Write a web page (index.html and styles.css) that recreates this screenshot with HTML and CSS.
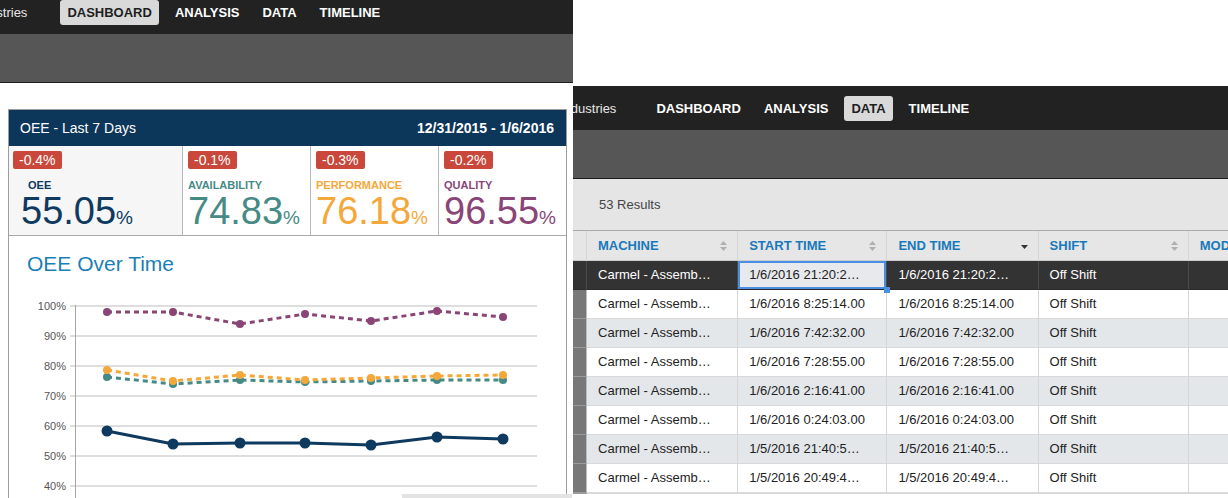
FILE: index.html
```html
<!DOCTYPE html>
<html lang="en">
<head>
<meta charset="utf-8">
<title>OEE Dashboard &amp; Data</title>
<link rel="stylesheet" href="styles.css">
</head>
<body>
<div class="desk">

  <section class="shot shot-left">
    <div class="app">
      <nav class="topnav">
        <span class="brand">Industries</span>
        <ul class="menu">
          <li class="active">DASHBOARD</li>
          <li>ANALYSIS</li>
          <li>DATA</li>
          <li>TIMELINE</li>
        </ul>
      </nav>
      <div class="subbar"></div>
      <main class="dash">
        <div class="card">
          <header class="card-head">
            <span>OEE - Last 7 Days</span>
            <strong>12/31/2015 - 1/6/2016</strong>
          </header>
          <div class="kpis">
            <div class="kpi kpi-oee">
              <span class="delta">-0.4%</span>
              <div class="kpi-label">OEE</div>
              <div class="kpi-value">55.05<small>%</small></div>
            </div>
            <div class="kpi kpi-avail">
              <span class="delta">-0.1%</span>
              <div class="kpi-label">AVAILABILITY</div>
              <div class="kpi-value">74.83<small>%</small></div>
            </div>
            <div class="kpi kpi-perf">
              <span class="delta">-0.3%</span>
              <div class="kpi-label">PERFORMANCE</div>
              <div class="kpi-value">76.18<small>%</small></div>
            </div>
            <div class="kpi kpi-qual">
              <span class="delta">-0.2%</span>
              <div class="kpi-label">QUALITY</div>
              <div class="kpi-value">96.55<small>%</small></div>
            </div>
          </div>
          <div class="chart-block">
            <h2>OEE Over Time</h2>
            <svg class="chart" viewBox="9 286 557 220" width="557" height="220">
              <g class="gridlines">
                <line x1="70" x2="537" y1="306" y2="306"/>
                <line x1="70" x2="537" y1="336" y2="336"/>
                <line x1="70" x2="537" y1="366" y2="366"/>
                <line x1="70" x2="537" y1="396" y2="396"/>
                <line x1="70" x2="537" y1="426" y2="426"/>
                <line x1="70" x2="537" y1="456" y2="456"/>
                <line x1="70" x2="537" y1="486" y2="486"/>
              </g>
              <line class="axis" x1="75.5" x2="75.5" y1="305" y2="506"/>
              <g class="ylabels">
                <text x="66" y="310">100%</text>
                <text x="66" y="340">90%</text>
                <text x="66" y="370">80%</text>
                <text x="66" y="400">70%</text>
                <text x="66" y="430">60%</text>
                <text x="66" y="460">50%</text>
                <text x="66" y="490">40%</text>
              </g>
              <polyline class="line dashed s-teal" points="107,377 173,384 240,380 305,382 371,381 437,380 503,380"/>
              <polyline class="line dashed s-orange" points="107,370 173,381 240,375 305,380 371,378 437,376 503,375"/>
              <polyline class="line dashed s-purple" points="107,312 173,312 240,324 305,314 371,321 437,311 503,317"/>
              <polyline class="line s-navy" points="107,431 173,444 240,443 305,443 371,445 437,437 503,439"/>
              <g class="dots d-teal">
                <circle cx="107" cy="377" r="4"/><circle cx="173" cy="384" r="4"/><circle cx="240" cy="380" r="4"/><circle cx="305" cy="382" r="4"/><circle cx="371" cy="381" r="4"/><circle cx="437" cy="380" r="4"/><circle cx="503" cy="380" r="4"/>
              </g>
              <g class="dots d-orange">
                <circle cx="107" cy="370" r="4"/><circle cx="173" cy="381" r="4"/><circle cx="240" cy="375" r="4"/><circle cx="305" cy="380" r="4"/><circle cx="371" cy="378" r="4"/><circle cx="437" cy="376" r="4"/><circle cx="503" cy="375" r="4"/>
              </g>
              <g class="dots d-purple">
                <circle cx="107" cy="312" r="4"/><circle cx="173" cy="312" r="4"/><circle cx="240" cy="324" r="4"/><circle cx="305" cy="314" r="4"/><circle cx="371" cy="321" r="4"/><circle cx="437" cy="311" r="4"/><circle cx="503" cy="317" r="4"/>
              </g>
              <g class="dots d-navy">
                <circle cx="107" cy="431" r="5.5"/><circle cx="173" cy="444" r="5.5"/><circle cx="240" cy="443" r="5.5"/><circle cx="305" cy="443" r="5.5"/><circle cx="371" cy="445" r="5.5"/><circle cx="437" cy="437" r="5.5"/><circle cx="503" cy="439" r="5.5"/>
              </g>
            </svg>
          </div>
        </div>
      </main>
    </div>
    <div class="hscroll"></div>
  </section>

  <section class="shot shot-right">
    <div class="app">
      <nav class="topnav">
        <span class="brand">Industries</span>
        <ul class="menu">
          <li>DASHBOARD</li>
          <li>ANALYSIS</li>
          <li class="active">DATA</li>
          <li>TIMELINE</li>
        </ul>
      </nav>
      <div class="subbar"></div>
      <div class="results">53 Results</div>
      <table class="grid">
        <colgroup>
          <col class="c-gut"><col class="c-w151"><col class="c-w149"><col class="c-w151"><col class="c-w150"><col class="c-w150">
        </colgroup>
        <thead>
          <tr>
            <th class="gut"></th>
            <th>MACHINE<span class="sort"><svg viewBox="0 0 7 10" width="7" height="10"><path d="M3.5 0 L7 4 L0 4 Z M3.5 10 L7 6 L0 6 Z"/></svg></span></th>
            <th>START TIME<span class="sort"><svg viewBox="0 0 7 10" width="7" height="10"><path d="M3.5 0 L7 4 L0 4 Z M3.5 10 L7 6 L0 6 Z"/></svg></span></th>
            <th>END TIME<span class="sort sort-desc"><svg viewBox="0 0 7 10" width="7" height="10"><path d="M0 4 L7 4 L3.5 8 Z"/></svg></span></th>
            <th>SHIFT<span class="sort"><svg viewBox="0 0 7 10" width="7" height="10"><path d="M3.5 0 L7 4 L0 4 Z M3.5 10 L7 6 L0 6 Z"/></svg></span></th>
            <th>MOD</th>
          </tr>
        </thead>
        <tbody>
          <tr class="sel">
            <td class="gut"></td><td>Carmel - Assemb…</td><td class="focus">1/6/2016 21:20:2…</td><td>1/6/2016 21:20:2…</td><td>Off Shift</td><td></td>
          </tr>
          <tr>
            <td class="gut"></td><td>Carmel - Assemb…</td><td>1/6/2016 8:25:14.00</td><td>1/6/2016 8:25:14.00</td><td>Off Shift</td><td></td>
          </tr>
          <tr>
            <td class="gut"></td><td>Carmel - Assemb…</td><td>1/6/2016 7:42:32.00</td><td>1/6/2016 7:42:32.00</td><td>Off Shift</td><td></td>
          </tr>
          <tr>
            <td class="gut"></td><td>Carmel - Assemb…</td><td>1/6/2016 7:28:55.00</td><td>1/6/2016 7:28:55.00</td><td>Off Shift</td><td></td>
          </tr>
          <tr>
            <td class="gut"></td><td>Carmel - Assemb…</td><td>1/6/2016 2:16:41.00</td><td>1/6/2016 2:16:41.00</td><td>Off Shift</td><td></td>
          </tr>
          <tr>
            <td class="gut"></td><td>Carmel - Assemb…</td><td>1/6/2016 0:24:03.00</td><td>1/6/2016 0:24:03.00</td><td>Off Shift</td><td></td>
          </tr>
          <tr>
            <td class="gut"></td><td>Carmel - Assemb…</td><td>1/5/2016 21:40:5…</td><td>1/5/2016 21:40:5…</td><td>Off Shift</td><td></td>
          </tr>
          <tr>
            <td class="gut"></td><td>Carmel - Assemb…</td><td>1/5/2016 20:49:4…</td><td>1/5/2016 20:49:4…</td><td>Off Shift</td><td></td>
          </tr>
          <tr>
            <td class="gut"></td><td></td><td></td><td></td><td></td><td></td>
          </tr>
        </tbody>
      </table>
    </div>
  </section>

</div>
</body>
</html>
```

FILE: styles.css
```css
* { box-sizing: border-box; }

html, body {
  margin: 0;
  padding: 0;
}

body {
  background: #fff;
  font-family: "Liberation Sans", Arial, Helvetica, sans-serif;
  color: #222;
}

.desk {
  position: relative;
  width: 1228px;
  height: 498px;
  overflow: hidden;
}

/* the two cropped application windows */
.shot {
  position: absolute;
  overflow: hidden;
  background: #fff;
}

.shot-left {
  left: 0;
  top: 0;
  width: 573px;
  height: 498px;
}

.shot-left .app { margin-top: -10px; }

.shot-right {
  left: 573px;
  top: 86px;
  width: 655px;
  height: 412px;
}

/* top navigation */
.topnav {
  height: 44px;
  background: #222;
  display: flex;
  align-items: center;
  white-space: nowrap;
}

.brand {
  font-size: 13px;
  color: #e8e8e8;
}

.shot-left .brand { margin-left: -29px; }
.shot-right .brand { margin-left: -13px; }

.menu {
  display: flex;
  gap: 9px;
  margin: 0 0 0 33px;
  padding: 0;
  list-style: none;
}

.menu li {
  height: 25px;
  line-height: 25px;
  padding: 0 7px;
  border-radius: 3px;
  font-size: 13px;
  font-weight: bold;
  color: #fff;
}

.menu li.active {
  background: #d9d9d9;
  color: #1e1e1e;
}

.subbar {
  height: 49px;
  background: #565656;
  border-bottom: 1px solid #1c1c1c;
}

/* dashboard */
.dash {
  padding: 26px 6px 0 8px;
}

.card {
  border: 1px solid #9d9d9d;
}

.card-head {
  height: 36px;
  background: #0c365a;
  color: #fff;
  display: flex;
  justify-content: space-between;
  align-items: center;
  padding: 0 12px 0 11px;
  font-size: 14px;
}

.kpis {
  display: grid;
  grid-template-columns: 173px 128px 128px 1fr;
  border-bottom: 1px solid #a9a9a9;
}

.kpi {
  height: 89px;
  padding: 5px 5px;
}

.kpi + .kpi { border-left: 1px solid #b8b8b8; }

.kpi-oee {
  background: #f6f6f6;
  padding-left: 4px;
}

.delta {
  display: inline-block;
  height: 18px;
  line-height: 18px;
  padding: 0 6px;
  background: #c9483b;
  color: #fff;
  font-size: 14px;
  border-radius: 2px;
}

.kpi-label {
  margin-top: 10px;
  font-size: 11px;
  line-height: 13px;
  font-weight: bold;
}

.kpi-value {
  font-size: 38px;
  line-height: 38px;
}

.kpi-value small { font-size: 19px; }

.kpi-oee .kpi-label { margin-left: 15px; }
.kpi-oee .kpi-value { margin-left: 8px; }

.kpi-oee   { color: #0d3a5e; }
.kpi-avail { color: #468a86; }
.kpi-perf  { color: #f5a83a; }
.kpi-qual  { color: #8a4577; }

.chart-block h2 {
  margin: 16px 0 10px 18px;
  font-size: 21px;
  line-height: 24px;
  font-weight: normal;
  color: #1a7fb6;
}

.chart { display: block; }

.gridlines line { stroke: #dedede; stroke-width: 2; }
.axis { stroke: #a5a5a5; stroke-width: 1; }
.ylabels text { font-size: 11px; fill: #555; text-anchor: end; font-family: "Liberation Sans", Arial, sans-serif; }

.line { fill: none; stroke-width: 3; stroke-linejoin: round; }
.dashed { stroke-dasharray: 5 4; }
.s-teal   { stroke: #468a86; }
.s-orange { stroke: #f5a83a; }
.s-purple { stroke: #8a4577; }
.s-navy   { stroke: #0d3a5e; }
.d-teal   { fill: #468a86; }
.d-orange { fill: #f5a83a; }
.d-purple { fill: #8a4577; }
.d-navy   { fill: #0d3a5e; }

.hscroll {
  position: absolute;
  left: 402px;
  top: 494px;
  width: 170px;
  height: 4px;
  background: #e3e3e3;
}

/* data view */
.results {
  height: 51px;
  background: #e5e5e5;
  padding-left: 26px;
  display: flex;
  align-items: center;
  font-size: 13px;
  color: #444;
}

.grid {
  border-collapse: separate;
  border-spacing: 0;
  table-layout: fixed;
  width: 766px;
  border-top: 1px solid #a9a9a9;
  font-size: 13px;
}

.c-gut  { width: 14px; }
.c-w151 { width: 151px; }
.c-w149 { width: 149px; }
.c-w150 { width: 150px; }

.grid th,
.grid td {
  padding: 0 10px 0 11px;
  text-align: left;
  white-space: nowrap;
  border-right: 1px solid #d6d6d6;
}

.grid th {
  line-height: 29px;
  background: #e6e6e6;
  border-bottom: 1px solid #cdcdcd;
  font-weight: bold;
  color: #1779bb;
}

.grid td {
  line-height: 28px;
  background: #fff;
  border-bottom: 1px solid #d9d9d9;
  color: #222;
}

.grid th.gut,
.grid td.gut { padding: 0; }

.grid tbody tr:nth-child(odd) td { background: #e4e7ea; }

.grid tbody td.gut,
.grid tbody tr:nth-child(odd) td.gut {
  background: #787878;
  border-bottom-color: #9a9a9a;
  border-right-color: #bdbdbd;
}

.grid tbody tr.sel td,
.grid tbody tr.sel td.gut {
  background: #333;
  color: #fff;
  border-bottom-color: #2a2a2a;
  border-right-color: #4a4a4a;
}

.grid tbody tr.sel td.focus {
  position: relative;
  background: #e7e9ec;
  color: #222;
  box-shadow: inset 0 0 0 2px #4a90e2;
}

.grid tbody tr.sel td.focus::after {
  content: "";
  position: absolute;
  right: -4px;
  bottom: -4px;
  width: 6px;
  height: 6px;
  background: #4a90e2;
}

.sort {
  float: right;
  margin-top: 10px;
  line-height: 0;
}

.sort svg { fill: #b0b0b0; }
.sort-desc svg { fill: #333; }
```
